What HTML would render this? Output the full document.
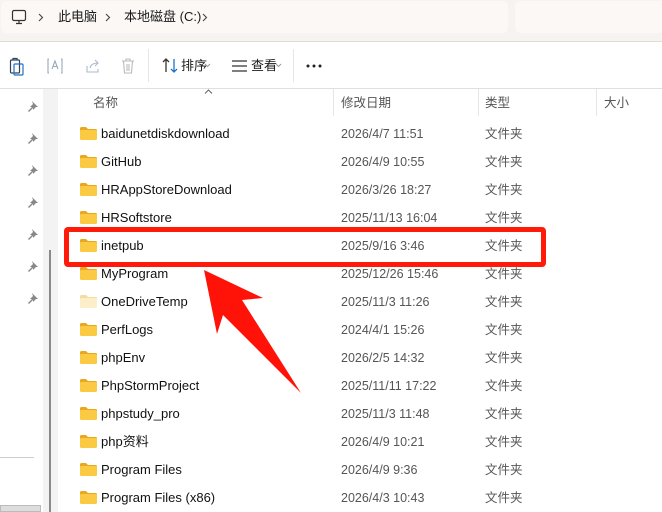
<!DOCTYPE html><html><head><meta charset="utf-8"><style>
*{margin:0;padding:0;box-sizing:border-box}
body{width:662px;height:512px;overflow:hidden;background:#fff;font-family:"Liberation Sans","Noto Sans CJK SC",sans-serif;font-size:13px;color:#1a1a1a;position:relative}
.top{position:absolute;left:0;top:0;width:662px;height:42px;background:#f7f3f0;border-bottom:1px solid #e2dcd7}
.crumb{position:absolute;left:1px;top:1px;width:507px;height:32px;background:#fbf8f6;border-radius:5px}
.crumb2{position:absolute;left:515px;top:1px;width:150px;height:32px;background:#fbf8f6;border-radius:5px}
.t{position:absolute;white-space:nowrap;line-height:18px}
.tb{position:absolute;left:0;top:43px;width:662px;height:46px;background:#fff;border-bottom:1px solid #e5ded8}
.vs{position:absolute;width:1px;background:#e6e6e6}
.row{position:absolute;left:80px;height:20px;line-height:20px}
.fold{position:absolute;left:0;top:3px;width:17px;height:13px}
.nm{position:absolute;left:21px;top:0;font-size:13px;color:#111}
.dt{position:absolute;top:0;font-size:12.5px;color:#555}
</style></head><body>
<div class="top"><div class="crumb"></div><div class="crumb2"></div>
<svg style="position:absolute;left:11px;top:9px" width="16" height="16" viewBox="0 0 16 16" fill="none" stroke="#333" stroke-width="1.2"><rect x="1.5" y="1.5" width="13" height="10" rx="1.5"/><path d="M8 11.5v2.5M5 14.5h6"/></svg>
<svg style="position:absolute;left:38px;top:13px" width="6" height="9" viewBox="0 0 6 9" fill="none" stroke="#444" stroke-width="1.1"><path d="M1 1l3.5 3.5L1 8"/></svg>
<div class="t" style="left:58px;top:8px">此电脑</div>
<svg style="position:absolute;left:105px;top:13px" width="6" height="9" viewBox="0 0 6 9" fill="none" stroke="#444" stroke-width="1.1"><path d="M1 1l3.5 3.5L1 8"/></svg>
<div class="t" style="left:124px;top:8px">本地磁盘 (C:)</div>
<svg style="position:absolute;left:202px;top:13px" width="6" height="9" viewBox="0 0 6 9" fill="none" stroke="#444" stroke-width="1.1"><path d="M1 1l3.5 3.5L1 8"/></svg>
</div>
<div class="tb">
<svg style="position:absolute;left:9px;top:14px" width="16" height="19" viewBox="0 0 16 19" fill="none" stroke="#345" stroke-width="1.2"><rect x="1.5" y="3" width="9" height="13" rx="1"/><rect x="5" y="7" width="9" height="11" rx="1" stroke="#1e73c8"/><path d="M4 3V1.5h4V3"/></svg>
<svg style="position:absolute;left:46px;top:14px" width="18" height="18" viewBox="0 0 18 18" fill="none" stroke="#9ab" stroke-width="1.1"><path d="M3 2h-1v14h1M15 2h1v14h-1"/><path d="M6 12l3-8 3 8M7 9.5h4"/></svg>
<svg style="position:absolute;left:84px;top:14px" width="18" height="18" viewBox="0 0 18 18" fill="none" stroke="#abc" stroke-width="1.1"><path d="M3 9v6h11v-3"/><path d="M6 11c1-4 4-5 8-5M11 3l3 3-3 3"/></svg>
<svg style="position:absolute;left:120px;top:14px" width="16" height="18" viewBox="0 0 16 18" fill="none" stroke="#bbb" stroke-width="1.1"><path d="M2 4h12M6 4V2h4v2M3.5 4l1 12h7l1-12M7 7v7M9 7v7"/></svg>
<div class="vs" style="left:148px;top:6px;height:33px"></div>
<svg style="position:absolute;left:161px;top:14px" width="20" height="18" viewBox="0 0 20 18" fill="none" stroke-width="1.3"><path d="M5 15V2M2 5l3-3 3 3" stroke="#333"/><path d="M13 2v13M10 12l3 3 3-3" stroke="#1e73c8"/></svg>
<div class="t" style="left:181px;top:14px">排序</div>
<svg style="position:absolute;left:204px;top:20px" width="7" height="5" viewBox="0 0 7 5" fill="none" stroke="#999"><path d="M1 1l2.5 2.5L6 1"/></svg>
<svg style="position:absolute;left:231px;top:17px" width="17" height="12" viewBox="0 0 17 12" stroke="#333" stroke-width="1.2"><path d="M1 1h15M1 6h15M1 11h15"/></svg>
<div class="t" style="left:251px;top:14px">查看</div>
<svg style="position:absolute;left:275px;top:20px" width="7" height="5" viewBox="0 0 7 5" fill="none" stroke="#999"><path d="M1 1l2.5 2.5L6 1"/></svg>
<div class="vs" style="left:293px;top:6px;height:33px"></div>
<svg style="position:absolute;left:306px;top:21px" width="16" height="4"><circle cx="2" cy="2" r="1.5" fill="#222"/><circle cx="8" cy="2" r="1.5" fill="#222"/><circle cx="14" cy="2" r="1.5" fill="#222"/></svg>
</div>
<div style="position:absolute;left:43px;top:89px;width:15px;height:423px;background:#f3f3f3"></div>
<div style="position:absolute;left:49px;top:250px;width:2px;height:262px;background:#8a8a8a"></div>
<div style="position:absolute;left:0;top:457px;width:34px;height:1px;background:#ccc"></div>
<div style="position:absolute;left:0;top:505px;width:41px;height:7px;background:#ddd;border:1px solid #bbb"></div>
<div id="pins"></div>
<svg style="position:absolute;left:204px;top:89px" width="9" height="5" viewBox="0 0 9 5" fill="none" stroke="#666"><path d="M1 4.5l3.5-3.5 3.5 3.5"/></svg>
<div class="t" style="left:93px;top:94px;color:#555;font-size:12.5px">名称</div>
<div class="t" style="left:341px;top:94px;color:#555;font-size:12.5px">修改日期</div>
<div class="t" style="left:485px;top:94px;color:#555;font-size:12.5px">类型</div>
<div class="t" style="left:604px;top:94px;color:#555;font-size:12.5px">大小</div>
<div class="vs" style="left:333px;top:89px;height:27px"></div>
<div class="vs" style="left:478px;top:89px;height:27px"></div>
<div class="vs" style="left:596px;top:89px;height:27px"></div>
<div id="rows"></div>
<script>
var d=[["baidunetdiskdownload","2026/4/7 11:51"],["GitHub","2026/4/9 10:55"],["HRAppStoreDownload","2026/3/26 18:27"],["HRSoftstore","2025/11/13 16:04"],["inetpub","2025/9/16 3:46"],["MyProgram","2025/12/26 15:46"],["OneDriveTemp","2025/11/3 11:26"],["PerfLogs","2024/4/1 15:26"],["phpEnv","2026/2/5 14:32"],["PhpStormProject","2025/11/11 17:22"],["phpstudy_pro","2025/11/3 11:48"],["php资料","2026/4/9 10:21"],["Program Files","2026/4/9 9:36"],["Program Files (x86)","2026/4/3 10:43"]];
var h="";d.forEach(function(r,i){var y=124+i*28;var pale=r[0]=="OneDriveTemp";var c1=pale?"#f3dca0":"#e9a91e",c2=pale?"#fbeec8":"#fcc943";
h+='<div class="row" style="top:'+y+'px;width:480px"><svg class="fold" viewBox="0 0 17 13"><path d="M0 1.5Q0 0 1.5 0H6l2 2h7.5Q17 2 17 3.5V4H0z" fill="'+c1+'"/><rect x="0" y="3" width="17" height="10" rx="1.2" fill="'+c2+'"/></svg><div class="nm">'+r[0]+'</div><div class="dt" style="left:261px">'+r[1]+'</div><div class="dt" style="left:405px">文件夹</div></div>';});
document.getElementById("rows").innerHTML=h;
var p="";for(var i=0;i<7;i++)p+='<svg style="position:absolute;left:27px;top:'+(100+i*32)+'px" width="12" height="12" viewBox="0 0 12 12"><path d="M5 1l6 6-2 0-3 3 0-2-4 4-1-1 4-4-2 0 3-3z" fill="#888"/></svg>';
document.getElementById("pins").innerHTML=p;
</script>
<div style="position:absolute;left:64px;top:227px;width:482px;height:40px;border:5px solid #ff1a0a;border-radius:4px"></div>
<svg style="position:absolute;left:0;top:0" width="662" height="512"><polygon points="204,270 263,298 242,300 301,393 223,315 217,334" fill="#ff1208"/></svg>
</body></html>
